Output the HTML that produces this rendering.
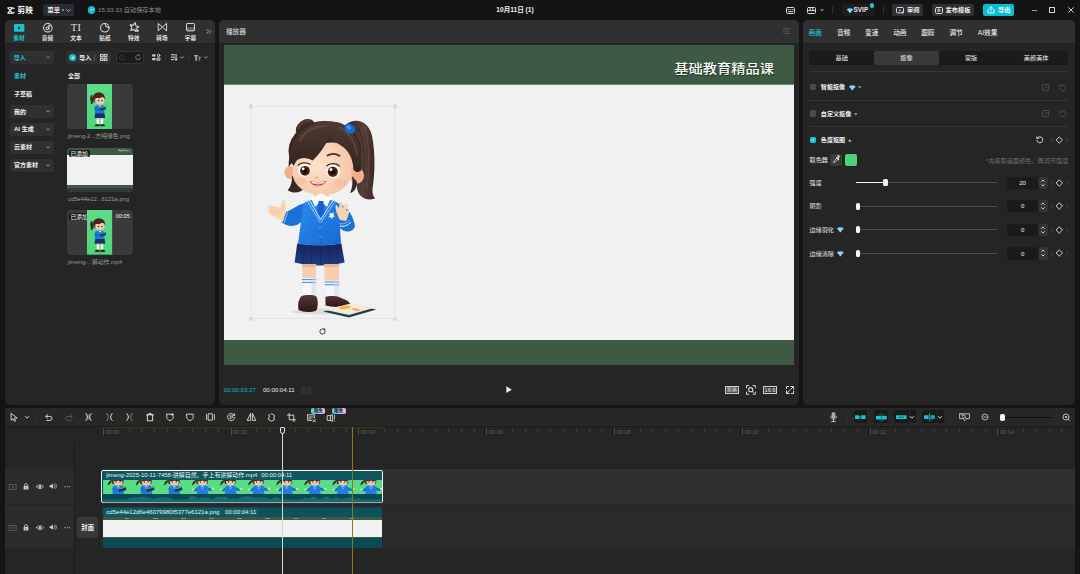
<!DOCTYPE html>
<html lang="zh-CN">
<head>
<meta charset="utf-8">
<title>剪映</title>
<style>
*{box-sizing:border-box;margin:0;padding:0}
html,body{width:1080px;height:574px;overflow:hidden;background:#141414}
body{position:relative;font-family:"Liberation Sans","Noto Sans CJK SC",sans-serif;color:#e6e6e6;font-size:7px;line-height:1}
.a{position:absolute}
.t{position:absolute;white-space:nowrap;line-height:10px;height:10px}
.c{color:#1ec8d6}
.panel{position:absolute;background:#252525;border-radius:5px;overflow:hidden}
.phead{position:absolute;left:0;top:0;right:0;height:23.6px;background:#303030;border-bottom:0.8px solid #222}
.btn{position:absolute;background:#303033;border-radius:2px}
svg{position:absolute;overflow:visible}
.ic{stroke:#d8d8d8;fill:none;stroke-width:1;stroke-linecap:round;stroke-linejoin:round}
.dim{color:#8c8c8c}
.hd{width:4.6px;height:4.6px;border-radius:3px;background:#d9d9d9}
</style>
</head>
<body>
<svg width="0" height="0" style="position:absolute">
<defs>
  <linearGradient id="gg" x1="0" y1="0" x2="0" y2="1"><stop offset="0" stop-color="#5edc8a"/><stop offset="1" stop-color="#50d57e"/></linearGradient>
  <symbol id="girlR" viewBox="0 0 25.2 45.2">
    <rect width="25.2" height="45.2" fill="url(#gg)"/>
    <ellipse cx="12.5" cy="42" rx="6" ry="1.2" fill="#3fb866"/>
    <path d="M5 10.5c-1.8 1-2.2 4-1.4 6.2c0.5 1.5 0.3 2.6-0.3 3.4c1.6 0.2 3-0.8 3.4-2.4z" fill="#3b2620"/>
    <ellipse cx="11.8" cy="13.6" rx="6" ry="5.4" fill="#45291f"/>
    <ellipse cx="12.8" cy="16.2" rx="4.7" ry="4.2" fill="#f6cfb2"/>
    <path d="M7.4 14.5c1.5-3.6 6.5-4.4 10-1.2c-2.6-0.4-4 0.2-5.2 1.2c-1.6-0.6-3.4-0.4-4.8 0z" fill="#45291f"/>
    <circle cx="11.4" cy="16.6" r="0.8" fill="#3a1f18"/><circle cx="15" cy="16.6" r="0.8" fill="#3a1f18"/>
    <path d="M12.4 18.7q0.9 0.6 1.8 0" stroke="#c45a4d" stroke-width="0.4" fill="none"/>
    <path d="M8.4 22c1.2-1.4 6.8-1.4 8.4 0l0.8 7.4h-9.8z" fill="#1d78dc"/>
    <path d="M11.4 21.2l1.4 1.6l1.4-1.6z" fill="#fff"/>
    <path d="M8.2 22.4c-1.2 1.4-1.4 3.6 0.6 4.6l4-0.6v-1.6l-3 0.2z" fill="#1869c9"/>
    <path d="M12.6 23.6l5.8-1.4l0.8 3l-5.8 1.6z" fill="#173f52"/>
    <path d="M12.8 24l5.4-1.3" stroke="#e8eef0" stroke-width="0.4"/>
    <path d="M8.2 29.2h9.2l0.8 4.8h-10.8z" fill="#18306f"/>
    <rect x="9.6" y="34" width="2.6" height="2" fill="#f3c9ab"/><rect x="13.6" y="34" width="2.6" height="2" fill="#f3c9ab"/>
    <rect x="9.6" y="35.6" width="2.6" height="4.6" fill="#f4f6f8"/><rect x="13.6" y="35.6" width="2.6" height="4.6" fill="#f4f6f8"/>
    <path d="M8.8 40.2h3.6v1.8h-4.2c-0.2-0.8 0-1.4 0.6-1.8zM13.4 40.2h3.4c0.8 0.4 1.2 1 1 1.8h-4.4z" fill="#2a1917"/>
  </symbol>
<symbol id="girlBig" viewBox="262 112 120 210">
  <!-- ponytail -->
  <path d="M344,126 C355,116 369,121 372,136 C375.4,152 375,174 372.6,188 C372,193 373,196 375,198.4 C368,201 361.6,198.6 358.6,193 C355.6,187 357,181 358.4,176 L361,165 L352,140Z" fill="url(#hairG)"/>
  <path d="M364,126 C370,142 370,168 366.6,190" stroke="#6f4f41" stroke-width="1.6" fill="none" opacity=".55"/><path d="M358.6,128 C364,142 365,162 362.6,182" stroke="#2e1c17" stroke-width="1.2" fill="none" opacity=".5"/>
  <!-- bun left -->
  <ellipse cx="305.5" cy="128" rx="10.5" ry="8" fill="#3f2c26" transform="rotate(-35 305.5 128)"/>
  <path d="M298,129 C300,123 306,120 311,121" stroke="#6d4b3d" stroke-width="1.5" fill="none" opacity=".7"/>
  <!-- hair back -->
  <ellipse cx="325" cy="151" rx="36.5" ry="30" fill="#3a2823"/>
  <!-- ears -->
  <ellipse cx="290" cy="172.5" rx="5.6" ry="6.4" fill="#f2b08a"/>
  <ellipse cx="356.8" cy="175.5" rx="7.2" ry="8.2" fill="#f3b48e"/>
  <ellipse cx="357" cy="176" rx="3.4" ry="4.4" fill="#eea583" opacity=".7"/>
  <!-- side strands -->
  <path d="M292,176 C292,184 290,188 287.5,190 C294,194.5 301,192.5 305,188 C299,186 296.5,182 296,175Z" fill="#3a2823"/>
  <path d="M352,176 C353,183 352,189 350,193 C354,192 357,188 357,182Z" fill="#3a2823"/>
  <!-- neck -->
  <path d="M314,190 h15 v10 h-15z" fill="#efb896"/>
  <!-- face -->
  <ellipse cx="332" cy="161" rx="23" ry="18.5" fill="url(#skinG)"/><ellipse cx="322" cy="172.5" rx="29.6" ry="23" fill="url(#skinG)"/>
  <ellipse cx="300.5" cy="181.5" rx="5.5" ry="3.6" fill="#f59f8a" opacity=".3"/>
  <ellipse cx="340" cy="183" rx="6" ry="3.8" fill="#f59f8a" opacity=".3"/>
  <!-- eyes -->
  <ellipse cx="304.4" cy="170.2" rx="6.3" ry="6.5" fill="#fffaf6"/>
  <circle cx="305" cy="170.8" r="4.9" fill="#4b2417"/><circle cx="305" cy="171" r="2.7" fill="#1c0c08"/><circle cx="303.2" cy="168.8" r="1.4" fill="#fff"/>
  <ellipse cx="333.2" cy="171.2" rx="6.6" ry="6.8" fill="#fffaf6"/>
  <circle cx="332.8" cy="171.8" r="5.1" fill="#4b2417"/><circle cx="332.8" cy="172" r="2.8" fill="#1c0c08"/><circle cx="331" cy="169.6" r="1.5" fill="#fff"/>
  <path d="M298,165.6 C300,162.6 306,161.8 310.4,164.4" stroke="#3a221b" stroke-width="1.2" fill="none"/>
  <path d="M326.6,166 C329.6,162.8 336.6,162.8 340,166.4" stroke="#3a221b" stroke-width="1.2" fill="none"/>
  <path d="M327.5,155.5 C331,153.4 336,153.6 339.5,155.8" stroke="#4a2f27" stroke-width="1.8" fill="none" stroke-linecap="round"/>
  <ellipse cx="316.6" cy="177.4" rx="1.6" ry="1.1" fill="#f0a488" opacity=".8"/>
  <!-- mouth -->
  <path d="M309.6,181 C313,182.4 322,182.4 326,181 C324,187 312,187.4 309.6,181Z" fill="#a82a35"/>
  <path d="M311.2,181.6 C315,182.8 321,182.8 324.6,181.6 L324,183.2 C320,184 315,184 311.8,183.2Z" fill="#fff"/>
  <path d="M313.5,185.4 C316,184 320,184 322,185.2 C319.5,186.8 316,186.8 313.5,185.4Z" fill="#f08a8a"/>
  <!-- bangs -->
  <path d="M331,122 C310,119 289,134 288.6,167 C292,162 297.6,158.6 304,158 C307,158 310,159 312.6,160.6 C319,154.6 325,146.6 328.6,138 C330.6,133 331.6,127 331,122Z" fill="url(#hairG2)"/>
  <path d="M331,122 C346,120 363,136 361.4,170 C358.6,173 355.6,172.5 353.6,170 C353,160 349.6,151 341.6,146 C336.6,143 332.6,140.6 329.6,137 C330.8,132 331.6,127 331,122Z" fill="url(#hairG2)"/>
  <path d="M300,140 C305,131 315,126 326,126" stroke="#7a5646" stroke-width="2.2" fill="none" opacity=".55" stroke-linecap="round"/>
  <path d="M340,128 C350,133 356,144 357,156" stroke="#7a5646" stroke-width="2" fill="none" opacity=".45" stroke-linecap="round"/>
  <!-- hair tie -->
  <ellipse cx="349.8" cy="128.8" rx="5.6" ry="4.6" fill="#1668d8" transform="rotate(35 349.8 128.8)"/>
  <ellipse cx="348.8" cy="127.4" rx="2.6" ry="1.6" fill="#4f9bf2" transform="rotate(35 348.8 127.4)"/>
  <!-- arms behind body -->
  <path d="M305,203 C297,205 290,211 285.6,212 L281.6,222.6 C290,228.6 299,226 304,219Z" fill="#1b72d6"/>
  <path d="M337,203 C346,205 353,214 355,226 C353,233 344,233 340,228 L337,218Z" fill="#1b72d6"/>
  <!-- body -->
  <path d="M303.6,203.6 C309,197.6 333,197.6 338.4,203.6 L341,243.6 C327,246 311,246 298,243.6Z" fill="url(#jackG)"/>
  <path d="M311,197.4 L321,193.6 L331,197.4 L327,207 L321,201 L315,207Z" fill="#fbfcff"/>
  <path d="M318.6,201 h4.8 l0.8,12.4 l-3.2,4 l-3.2,-4z" fill="#1560d0"/>
  <path d="M309,199.4 L320.6,219.6 L333.6,199.4" stroke="#e8f2ff" stroke-width="0.9" fill="none"/>
  <path d="M307,200.6 L320.6,223 L335.6,200.6" stroke="#e8f2ff" stroke-width="0.7" fill="none" opacity=".85"/>
  <circle cx="320.4" cy="227.4" r="0.9" fill="#b6d4f7"/><circle cx="320.4" cy="236.6" r="0.9" fill="#b6d4f7"/>
  <path d="M320.4,222 V244.6" stroke="#1462c4" stroke-width="0.6"/>
  <path d="M330.6,211.6 l1.4,2 l2.2,-0.8 l-0.8,2.2 l1.6,1.6 l-2.2,0.2 l-0.8,2.4 l-1.2,-2 l-2.4,0 l1.6,-1.8 l-1,-2.2 l2.2,0.6z" fill="#fff"/>
  <!-- cuffs -->
  <path d="M285.6,212 L281.6,222.6" stroke="#eef5ff" stroke-width="1" /><path d="M287.6,212.6 L283.8,223.6" stroke="#eef5ff" stroke-width="0.7" opacity=".8"/>
  <path d="M340,226 C344,227 348,225.4 351,222" stroke="#eef5ff" stroke-width="1" fill="none"/><path d="M339.4,223.6 C343,224.6 347,223 349.8,219.8" stroke="#eef5ff" stroke-width="0.7" fill="none" opacity=".8"/>
  <!-- left hand -->
  <path d="M285.4,211.6 C282,207.6 276,206.4 269.6,205.6 C267.2,205.8 267.6,207.8 270,208.6 C266.8,208.6 267,211 270,211.6 C268,212.4 268.6,214.4 271.6,214.4 C271,215.8 272.4,216.8 274.6,216.2 C277.6,219 280.6,220.6 283.6,220.6Z" fill="#f9d2b2"/>
  <path d="M280.4,209.6 C280.4,205 281.6,201.8 283.2,199.8 C285.4,200.2 286,205 285.8,211Z" fill="#f9d2b2"/>
  <path d="M272,211.6 C275,212 278,213 280,215" stroke="#eab596" stroke-width="0.5" fill="none"/>
  <!-- right hand -->
  <path d="M340,220 C337,214 335,209 335.6,205.4 C337,204.4 338.4,206.4 339,209 C339,205.6 339.6,202.4 341.4,201.6 C343,202.4 342.6,206 342.6,208.6 C343.6,205.6 345.4,203.4 347,204 C348.4,205.6 346.6,209 346,211.6 C347.6,210 349,210 349.2,211.4 C348.6,214.6 347.6,218 346,221Z" fill="#f9d2b2"/>
  <!-- skirt -->
  <path d="M297.2,243.4 C311,245.8 327,245.8 341.4,243.4 L344.6,262.6 C329,266.4 310,266.4 294.6,262.6Z" fill="url(#skirtG)"/>
  <path d="M304,245 L302.6,264 M312,245.6 L311.4,265 M320.4,245.8 V265.4 M329,245.6 L330,265 M336,245 L338,264" stroke="#13234f" stroke-width="0.6" opacity=".8"/>
  <!-- legs -->
  <path d="M302.4,264 h13.6 v15 h-13.6z" fill="#f6cdae"/><path d="M324.4,264 h14.6 v17 h-14.6z" fill="#f6cdae"/>
  <path d="M302,264 h14.4 v3 h-14.4z M324,264 h15.4 v3 h-15.4z" fill="#d9a588" opacity=".55"/>
  <path d="M302,278 h14.2 l-0.6,19 h-12.6z" fill="#f4f6f9"/><path d="M324.6,280.4 h14.6 l-0.6,18 h-13.4z" fill="#f4f6f9"/>
  <path d="M302,279.6 h14.2 M302,282.4 h14.2" stroke="#3a86e4" stroke-width="1"/>
  <path d="M324.6,282 h14.6 M324.6,284.8 h14.6" stroke="#3a86e4" stroke-width="1"/>
  <path d="M311,278 h5.2 l-0.6,19 h-3.6z M334,280.4 h5.2 l-0.6,18 h-3.6z" fill="#c9d3e0" opacity=".5"/>
  <!-- shadows -->
  <ellipse cx="322" cy="311.5" rx="30" ry="3" fill="#cfcfcf" opacity=".6"/>
  <!-- shoes -->
  <path d="M301.6,296 C306,294.6 313,294.6 316.4,296.4 C318.4,301 318,307 316.4,310.4 C311,312.6 303,312.4 298.6,310 C297.4,304.6 298.6,299 301.6,296Z" fill="url(#shoeG)"/>
  <path d="M325.4,297 C329,295.4 336,295.6 340,297.4 C345,299 350,301.6 350.4,304.4 C345,307.4 332,307.6 325.6,305.6Z" fill="url(#shoeG)"/>
  <!-- book -->
  <path d="M323,311.4 L351,304.6 L376.4,309.4 L349,317.4Z" fill="#1e3e52"/>
  <path d="M324.6,309.8 L351,303.4 L374.4,307.8 L349,315Z" fill="#f3ecd2"/>
  <path d="M337.6,306.6 L362,311.2" stroke="#cfc6a5" stroke-width="0.5"/>
  <ellipse cx="345" cy="307.4" rx="6" ry="1.8" fill="#f0b84a" transform="rotate(-8 345 307.4)"/>
  <ellipse cx="356" cy="309.6" rx="4" ry="1.4" fill="#f3a7a0" transform="rotate(8 356 309.6)"/>
</symbol>
<linearGradient id="hairG" x1="0" y1="0" x2="1" y2="0"><stop offset="0" stop-color="#33221d"/><stop offset=".6" stop-color="#54403a"/><stop offset="1" stop-color="#3a2823"/></linearGradient>
<linearGradient id="hairG2" x1="0" y1="0" x2="0" y2="1"><stop offset="0" stop-color="#4e3a33"/><stop offset="1" stop-color="#34241f"/></linearGradient>
<radialGradient id="skinG" gradientUnits="userSpaceOnUse" cx="318" cy="166" r="38"><stop offset="0" stop-color="#fde3cb"/><stop offset="1" stop-color="#f5c4a3"/></radialGradient>
<linearGradient id="jackG" x1="0" y1="0" x2="1" y2="1"><stop offset="0" stop-color="#2b8cf0"/><stop offset="1" stop-color="#166ad2"/></linearGradient>
<linearGradient id="skirtG" x1="0" y1="0" x2="0" y2="1"><stop offset="0" stop-color="#15275d"/><stop offset="1" stop-color="#213a82"/></linearGradient>
<linearGradient id="shoeG" x1="0" y1="0" x2="0" y2="1"><stop offset="0" stop-color="#553632"/><stop offset="1" stop-color="#2c1a18"/></linearGradient>
<symbol id="gf" viewBox="0 0 28.1 14.1">
  <path d="M8.8,0 C6.4,0.6 5,2.6 4.6,5.4 C5.8,5 7,3.8 8,2.4 L10,0Z" fill="#3b241d"/>
  <path d="M9.4,0 H20.4 C20.8,1.6 20.4,3 19.6,4 H9.6 C8.8,2.8 8.8,1.2 9.4,0Z" fill="#43281f"/>
  <path d="M10.6,0 H19.8 C20.2,3.2 18.2,5.6 15.2,5.6 C12.2,5.6 10,3.4 10.6,0Z" fill="#f7d0b3"/>
  <path d="M10.4,0 H20 C20,0.8 19.6,1.2 19,1.4 C17,0.4 13,0.4 11,1.6 C10.6,1.2 10.4,0.6 10.4,0Z" fill="#43281f"/>
  <circle cx="13.2" cy="2" r="0.7" fill="#3a1c14"/><circle cx="17" cy="2" r="0.7" fill="#3a1c14"/>
  <path d="M14.2,3.8 Q15.2,4.6 16.2,3.8Z" fill="#b33a3a"/>
  <path d="M10.4,6 C12,5 18.4,5 20,6 L21,14.1 H9.4Z" fill="#1f7de0"/>
  <path d="M14,5.4 L15.2,7 L16.4,5.4Z" fill="#fff"/>
  <path d="M13.2,5.8 L15.2,9 L17.2,5.8" stroke="#dcecff" stroke-width="0.4" fill="none"/>
</symbol>
<symbol id="gfb" viewBox="0 0 28.1 14.1"><use href="#gf"/><path d="M15,8.6 L22.4,6.6 L23.4,10 L16,12Z" fill="#16394a"/><path d="M15.4,9 L22.2,7.2" stroke="#eef3f5" stroke-width="0.5"/><path d="M10,7 C8.6,9 9.4,11.4 11.4,12 L15.6,11 V9.4 L12.4,9.8Z" fill="#1a6fce"/></symbol>
<symbol id="gfh" viewBox="0 0 28.1 14.1"><use href="#gf"/><path d="M20,7 C22,8 23.4,9 24.4,8.4 L25.2,10 C23.4,11.4 21.4,11 20.4,10Z" fill="#1a6fce"/><ellipse cx="25.4" cy="8.8" rx="1.5" ry="1" fill="#f7d0b3"/><path d="M10.4,7 C8.6,8.4 7.6,9.4 6.6,9 L6,10.6 C7.8,11.8 9.6,11.2 10.6,10Z" fill="#1a6fce"/><ellipse cx="5.8" cy="9.4" rx="1.4" ry="1" fill="#f7d0b3"/></symbol>
</defs>
</svg>
<!-- ===== TITLE BAR ===== -->
<div id="titlebar" class="a" style="left:0;top:0;width:1080px;height:20px;">
  <!-- logo -->
  <svg style="left:7px;top:7px" width="8" height="7" viewBox="0 0 8 7"><path d="M0.5 0.7h5.3l1.7 1.2M0.5 6.3h5.3l1.7-1.2M0.5 0.7l5.2 5.6M0.5 6.3l5.2-5.6" stroke="#fff" stroke-width="1.1" fill="none" stroke-linejoin="round"/></svg>
  <div class="t" style="left:17.5px;top:5.5px;font-size:7.6px;font-weight:bold;color:#fff;letter-spacing:0.2px">剪映</div>
  <div class="btn" style="left:43px;top:4px;width:31px;height:12px;background:#2b2b31"></div>
  <div class="t" style="left:47.5px;top:5px;font-size:6.2px;color:#f0f0f0;font-weight:bold">菜单</div>
  <div class="a" style="left:61.5px;top:9px;width:2px;height:2px;border-radius:1px;background:#1ec8d6"></div>
  <svg style="left:66px;top:8.5px" width="5" height="3" viewBox="0 0 5 3"><path d="M0.3 0.4L2.5 2.5L4.7 0.4" stroke="#cfcfcf" stroke-width="0.8" fill="none"/></svg>
  <div class="a" style="left:87.7px;top:6.2px;width:7.6px;height:7.6px;border-radius:4px;background:#12bfcf"></div>
  <svg style="left:89.5px;top:8.4px" width="4" height="3" viewBox="0 0 4 3"><path d="M0.4 1.5L1.5 2.6L3.6 0.5" stroke="#fff" stroke-width="0.8" fill="none"/></svg>
  <div class="t" style="left:98px;top:5px;font-size:6.2px;color:#8f8f8f">15:33:33 自动保存本地</div>
  <div class="t" style="left:440px;width:150px;text-align:center;top:5px;font-size:6.6px;font-weight:bold;color:#f2f2f2">10月11日 (1)</div>
  <!-- right icons -->
  <svg style="left:786px;top:7px" width="9" height="7" viewBox="0 0 9 7"><rect x="0.5" y="0.5" width="8" height="6" rx="1" class="ic" stroke-width="0.9"/><path d="M2.2 4.6h4.6M2 2.6h0.6M4.2 2.6h0.6M6.4 2.6h0.6" class="ic" stroke-width="0.8"/></svg>
  <svg style="left:807px;top:7px" width="9" height="7" viewBox="0 0 9 7"><rect x="0.5" y="0.5" width="8" height="6" rx="1" class="ic" stroke-width="0.9"/><path d="M0.5 3.6h8M3.2 0.5v3M5.8 0.5v3" class="ic" stroke-width="0.8"/></svg>
  <svg style="left:820px;top:9px" width="4" height="3" viewBox="0 0 4 3"><path d="M0 0.3h4L2 2.6z" fill="#8a8a8a"/></svg>
  <div class="a" style="left:831.5px;top:6px;width:1px;height:8px;background:#303030"></div>
  <div class="btn" style="left:841.5px;top:4px;width:32.5px;height:12px;background:#1d1d20;border-radius:3px"></div>
  <svg style="left:846.5px;top:7.5px" width="6" height="5" viewBox="0 0 6 5"><path d="M1.2 0.2h3.6L6 1.7L3 4.9L0 1.7z" fill="#3fc3ee"/><path d="M0 1.7h6M2.1 1.7L3 4.8L3.9 1.7" stroke="#e8f8ff" stroke-width="0.5" fill="none"/></svg>
  <div class="t" style="left:853.5px;top:5px;font-size:6.3px;font-weight:bold;color:#e8e8e8;letter-spacing:0.1px">SVIP</div>
  <div class="a" style="left:870px;top:3.4px;width:4.4px;height:4.4px;border-radius:2.2px;background:#1ec8d6"></div>
  <div class="a" style="left:882.5px;top:6px;width:1px;height:8px;background:#303030"></div>
  <div class="btn" style="left:892px;top:4px;width:31px;height:12px"></div>
  <svg style="left:896px;top:7px" width="8" height="7" viewBox="0 0 8 7"><rect x="0.5" y="0.5" width="7" height="5.4" rx="1" class="ic" stroke-width="0.9"/><path d="M3.2 2.2v2.2l1.8-1.1z" fill="#d8d8d8"/><circle cx="6.6" cy="5.6" r="1" fill="#d8d8d8"/></svg>
  <div class="t" style="left:907px;top:5px;font-size:6.2px;font-weight:bold;color:#ececec">审阅</div>
  <div class="btn" style="left:931.5px;top:4px;width:42.5px;height:12px"></div>
  <svg style="left:934.7px;top:6.7px" width="8" height="7" viewBox="0 0 8 7"><rect x="0.5" y="0.5" width="7" height="6" rx="1.2" class="ic" stroke-width="0.9"/><path d="M3.1 2.2v2.6l2.1-1.3z" class="ic" stroke-width="0.7"/></svg>
  <div class="t" style="left:945.6px;top:5px;font-size:6.2px;font-weight:bold;color:#ececec">发布模板</div>
  <div class="btn" style="left:983px;top:4px;width:30.5px;height:12px;background:#07c0cf"></div>
  <svg style="left:987px;top:6.3px" width="8" height="8" viewBox="0 0 8 8"><path d="M1 3.6v3.4h6V3.6M4 5V0.8M2.3 2.4L4 0.7L5.7 2.4" stroke="#fff" stroke-width="0.9" fill="none" stroke-linejoin="round" stroke-linecap="round"/></svg>
  <div class="t" style="left:998px;top:5px;font-size:6.2px;font-weight:bold;color:#fff">导出</div>
  <div class="a" style="left:1031.5px;top:10px;width:5.5px;height:1px;background:#9a9a9a"></div>
  <div class="a" style="left:1049px;top:7.3px;width:6.4px;height:5.8px;border:1px solid #d8d8d8;border-radius:0.5px"></div>
  <svg style="left:1067.5px;top:7.2px" width="6" height="6" viewBox="0 0 6 6"><path d="M0.3 0.3L5.7 5.7M5.7 0.3L0.3 5.7" stroke="#d8d8d8" stroke-width="0.9"/></svg>
</div>

<!-- ===== LEFT PANEL ===== -->
<div id="left" class="panel" style="left:5px;top:20px;width:210px;height:385px;">
  <div class="phead"></div>
  <div class="t" style="left:-1.0px;width:30px;text-align:center;top:12.5px;font-size:5.65px;color:#1ec8d6;font-weight:bold">素材</div>
  <div class="t" style="left:27.5px;width:30px;text-align:center;top:12.5px;font-size:5.65px;color:#e0e0e0;font-weight:bold">音频</div>
  <div class="t" style="left:56.0px;width:30px;text-align:center;top:12.5px;font-size:5.65px;color:#e0e0e0;font-weight:bold">文本</div>
  <div class="t" style="left:85.0px;width:30px;text-align:center;top:12.5px;font-size:5.65px;color:#e0e0e0;font-weight:bold">贴纸</div>
  <div class="t" style="left:113.7px;width:30px;text-align:center;top:12.5px;font-size:5.65px;color:#e0e0e0;font-weight:bold">特效</div>
  <div class="t" style="left:142.0px;width:30px;text-align:center;top:12.5px;font-size:5.65px;color:#e0e0e0;font-weight:bold">转场</div>
  <div class="t" style="left:170.5px;width:30px;text-align:center;top:12.5px;font-size:5.65px;color:#e0e0e0;font-weight:bold">字幕</div>
  <svg style="left:8.8px;top:3.6px" width="10.4" height="7.8" viewBox="0 0 10.4 7.8"><rect x="0" y="0" width="10.4" height="7.8" rx="1" fill="#12c3d1"/><path d="M4 2.2v3.4l3-1.7z" fill="#1b1b1b"/></svg>
  <svg style="left:37.7px;top:2.7px" width="9.6" height="9.6" viewBox="0 0 9 9"><circle cx="4.5" cy="4.5" r="4" class="ic" stroke-width="0.8"/><circle cx="4.2" cy="5" r="1.3" class="ic" stroke-width="0.8"/><path d="M5.5 5V2.2l1.3 0.6" class="ic" stroke-width="0.8"/></svg>
  <div class="t" style="left:56px;width:30px;text-align:center;top:1.6px;line-height:12px;height:12px;font-size:10.5px;color:#dcdcdc;font-family:'Liberation Serif',serif;letter-spacing:0.3px">TI</div>
  <svg style="left:95.2px;top:2.8px" width="9.6" height="9.6" viewBox="0 0 9 9"><circle cx="4.5" cy="4.5" r="4" class="ic" stroke-width="0.8"/><path d="M4.9 0.6C4.7 2.8 6.2 4.3 8.4 4.1" class="ic" stroke-width="0.8"/></svg>
  <svg style="left:123.6px;top:2.4px" width="10.4" height="10.2" viewBox="0 0 9.6 9.4"><g transform="rotate(12 4.8 4.8)"><path d="M4.8 0.5L6 3.1L8.9 3.5L6.8 5.5L7.3 8.4L4.8 7L2.3 8.4L2.8 5.5L0.7 3.5L3.6 3.1z" class="ic" stroke-width="0.75"/></g><path d="M8 7.2v1.6M7.2 8h1.6" class="ic" stroke-width="0.6"/></svg>
  <svg style="left:152.6px;top:3.4px" width="8.8" height="8.2" viewBox="0 0 8.8 8.2"><path d="M0.5 0.6L4.4 4.1L0.5 7.6zM8.3 0.6L4.4 4.1L8.3 7.6z" class="ic" stroke-width="0.8"/></svg>
  <svg style="left:181px;top:3.2px" width="9" height="8.4" viewBox="0 0 9 8.4"><rect x="0.5" y="0.5" width="8" height="7.4" rx="0.8" class="ic" stroke-width="0.8"/><path d="M0.6 4.4h7.8v3.4H0.6z" fill="#bdbdbd" opacity="0.55"/><path d="M1.8 6.2h2M4.8 6.2h2.4" stroke="#222" stroke-width="0.7"/></svg>
  <svg style="left:200.5px;top:9px" width="5.4" height="5" viewBox="0 0 5.4 5"><path d="M0.4 0.4L2.5 2.5L0.4 4.6M2.9 0.4L5 2.5L2.9 4.6" stroke="#bdbdbd" stroke-width="0.7" fill="none"/></svg>
  <div class="btn" style="left:5.0px;top:30.8px;width:44.2px;height:13px;background:#303033;border-radius:2px"></div>
  <div class="t" style="left:8.8px;top:32.5px;font-size:6px;color:#1ec8d6;font-weight:bold;">导入</div>
  <svg style="left:40.7px;top:35.8px" width="4" height="2.8" viewBox="0 0 4 2.8"><path d="M0.3 2.2L2 0.5L3.7 2.2" stroke="#1ec8d6" stroke-width="0.8" fill="none"/></svg>
  <div class="t" style="left:9.0px;top:51.0px;font-size:6px;color:#1ec8d6;font-weight:bold;">素材</div>
  <div class="t" style="left:9.0px;top:69.0px;font-size:6px;color:#f2f2f2;font-weight:bold;">子草稿</div>
  <div class="btn" style="left:4.8px;top:84.8px;width:44.6px;height:13.2px;background:#303033;border-radius:2px"></div>
  <div class="t" style="left:9.0px;top:86.5px;font-size:6px;color:#f2f2f2;font-weight:bold;">我的</div>
  <svg style="left:40.9px;top:89.7px" width="4" height="2.8" viewBox="0 0 4 2.8"><path d="M0.3 0.5L2 2.2L3.7 0.5" stroke="#bdbdbd" stroke-width="0.8" fill="none"/></svg>
  <div class="btn" style="left:4.8px;top:102.7px;width:44.6px;height:13.2px;background:#303033;border-radius:2px"></div>
  <div class="t" style="left:9.0px;top:104.4px;font-size:6px;color:#f2f2f2;font-weight:bold;">AI 生成</div>
  <svg style="left:40.9px;top:107.6px" width="4" height="2.8" viewBox="0 0 4 2.8"><path d="M0.3 0.5L2 2.2L3.7 0.5" stroke="#bdbdbd" stroke-width="0.8" fill="none"/></svg>
  <div class="btn" style="left:4.8px;top:120.7px;width:44.6px;height:13.2px;background:#303033;border-radius:2px"></div>
  <div class="t" style="left:9.0px;top:122.4px;font-size:6px;color:#f2f2f2;font-weight:bold;">云素材</div>
  <svg style="left:40.9px;top:125.6px" width="4" height="2.8" viewBox="0 0 4 2.8"><path d="M0.3 0.5L2 2.2L3.7 0.5" stroke="#bdbdbd" stroke-width="0.8" fill="none"/></svg>
  <div class="btn" style="left:4.8px;top:138.6px;width:44.6px;height:13.2px;background:#303033;border-radius:2px"></div>
  <div class="t" style="left:9.0px;top:140.3px;font-size:6px;color:#f2f2f2;font-weight:bold;">官方素材</div>
  <svg style="left:40.9px;top:143.5px" width="4" height="2.8" viewBox="0 0 4 2.8"><path d="M0.3 0.5L2 2.2L3.7 0.5" stroke="#bdbdbd" stroke-width="0.8" fill="none"/></svg>
  <div class="btn" style="left:61.0px;top:30.8px;width:44.6px;height:13px;background:#303033;border-radius:2px"></div>
  <div class="a" style="left:64.2px;top:34.2px;width:6.6px;height:6.6px;border-radius:4px;background:#12c3d1"></div>
  <svg style="left:65.7px;top:35.7px" width="3.6" height="3.6" viewBox="0 0 3.6 3.6"><path d="M1.8 0.3v3M0.3 1.8h3" stroke="#fff" stroke-width="0.7"/></svg>
  <div class="t" style="left:74.3px;top:32.5px;font-size:6px;color:#f2f2f2;font-weight:bold;">导入</div>
  <div class="a" style="left:89.3px;top:34.5px;width:0.6px;height:6px;background:#555"></div>
  <svg style="left:94.6px;top:34.1px" width="7.4" height="6.9" viewBox="0 0 7.2 6.8"><rect x="0.4" y="0.4" width="2.6" height="2.2" class="ic" stroke-width="0.7"/><rect x="4.2" y="0.4" width="2.6" height="2.2" class="ic" stroke-width="0.7"/><rect x="0.4" y="4.2" width="2.6" height="2.2" class="ic" stroke-width="0.7"/><rect x="4.2" y="4.2" width="2.6" height="2.2" class="ic" stroke-width="0.7"/></svg>
  <div class="a" style="left:110.5px;top:30.799999999999997px;width:28.6px;height:13px;background:#1b1b1b;border:0.8px solid #353535;border-radius:2px"></div>
  <svg style="left:113.8px;top:34.6px" width="6" height="6" viewBox="0 0 5 5"><circle cx="2.1" cy="2.1" r="1.7" stroke="#474747" stroke-width="0.55" fill="none"/><path d="M3.4 3.4L4.7 4.7" stroke="#474747" stroke-width="0.55"/></svg>
  <svg style="left:129.8px;top:34.4px" width="6.4" height="6.4" viewBox="0 0 5 5"><path d="M4.4 2.5A1.9 1.9 0 1 1 3.4 0.9" stroke="#8a8a8a" stroke-width="0.6" fill="none"/><path d="M2.8 0.2L3.8 0.9L3 1.8" stroke="#8a8a8a" stroke-width="0.5" fill="none"/></svg>
  <svg style="left:147px;top:34.3px" width="8.6" height="6.6" viewBox="0 0 8.6 6.6"><rect x="0.2" y="0.3" width="3.2" height="2.3" fill="#d0d0d0"/><rect x="0.2" y="4" width="3.2" height="2.3" fill="#d0d0d0"/><circle cx="6.6" cy="1.4" r="1.2" class="ic" stroke-width="0.7"/><rect x="5.3" y="4.1" width="2.7" height="2.1" class="ic" stroke-width="0.7"/></svg>
  <div class="a" style="left:160px;top:34.5px;width:0.6px;height:6px;background:#383838"></div>
  <svg style="left:165.6px;top:34.2px" width="6.4" height="6.8" viewBox="0 0 6.4 6.8"><path d="M0.3 0.8h3.4M0.3 3.2h3.4M0.3 5.6h2.4M5.1 0.4v5.8M3.9 5L5.1 6.3L6.2 5" class="ic" stroke-width="0.8"/></svg>
  <svg style="left:175.0px;top:36.4px" width="4" height="2.8" viewBox="0 0 4 2.8"><path d="M0.3 0.5L2 2.2L3.7 0.5" stroke="#bdbdbd" stroke-width="0.8" fill="none"/></svg>
  <div class="a" style="left:183px;top:34.5px;width:0.6px;height:6px;background:#383838"></div>
  <svg style="left:189.3px;top:34.6px" width="7" height="6" viewBox="0 0 7 6"><path d="M0.2 0.3h3.8v1H2.7v4.4H1.5V1.3H0.2z" fill="#d8d8d8"/><path d="M4.6 2.2h2.2M4.6 3.7h1.7M4.6 5.2h1.1" stroke="#d8d8d8" stroke-width="0.8"/></svg>
  <svg style="left:198.6px;top:36.4px" width="4" height="2.8" viewBox="0 0 4 2.8"><path d="M0.3 0.5L2 2.2L3.7 0.5" stroke="#bdbdbd" stroke-width="0.8" fill="none"/></svg>
  <div class="t" style="left:63.0px;top:50.5px;font-size:6px;color:#e6e6e6;font-weight:bold;">全部</div>
  <div class="a" style="left:61.8px;top:64px;width:66.7px;height:45.2px;background:#3a3a3a;border-radius:4px;overflow:hidden"><svg style="left:20.2px;top:0" width="25.2" height="45.2"><use href="#girlR"/></svg></div>
  <div class="t" style="left:63.0px;top:111.3px;font-size:5.82px;color:#9b9b9b;">jimeng-2...方纯绿色.png</div>
  <div class="a" style="left:61.8px;top:127.6px;width:66.7px;height:44.6px;background:#3a3a3a;border-radius:4px;overflow:hidden"><div class="a" style="left:0;top:0.6px;width:66.7px;height:40px;background:#3e5944"></div><div class="a" style="left:0;top:7px;width:66.7px;height:30.4px;background:#f1f1f1"></div><div class="t" style="left:51.6px;top:-1.3px;font-size:1.65px;color:#dfe8e2">基础教育精品课</div><div class="a" style="left:2px;top:2.4px;width:20.8px;height:7.4px;background:rgba(20,20,20,0.85);border-radius:1.5px"></div><div class="t" style="left:3.6px;top:1.1px;font-size:5.8px;color:#f4f4f4">已添加</div></div>
  <div class="t" style="left:63.0px;top:174.0px;font-size:5.82px;color:#9b9b9b;">cd5e44e12...6121a.png</div>
  <div class="a" style="left:61.8px;top:190.3px;width:66.7px;height:44.8px;background:#3a3a3a;border-radius:4px;overflow:hidden"><div class="a" style="left:2px;top:2.6px;width:20.8px;height:7.4px;background:rgba(20,20,20,0.85);border-radius:1.5px"></div><div class="t" style="left:3.6px;top:1.3px;font-size:5.8px;color:#f4f4f4">已添加</div><svg style="left:20px;top:0" width="25.4" height="44.8" viewBox="0 0 25.2 45.2" preserveAspectRatio="none"><use href="#girlR"/></svg><div class="t" style="left:49px;top:1.2px;font-size:5.6px;color:#f4f4f4">00:05</div></div>
  <div class="t" style="left:63.0px;top:237.0px;font-size:5.82px;color:#9b9b9b;">jimeng-...解动作.mp4</div>
</div>

<!-- ===== PLAYER PANEL ===== -->
<div id="player" class="panel" style="left:219px;top:20px;width:580px;height:385px;">
  <div class="phead"></div>
  <div class="t" style="left:7px;top:7px;font-size:6.6px;color:#e8e8e8">播放器</div>
  <svg style="left:563.5px;top:8.4px" width="7" height="6" viewBox="0 0 7 6"><path d="M0 0.5h7M0 3h7M0 5.5h7" stroke="#5c5c5c" stroke-width="0.8"/></svg>
  <div class="a" style="left:5px;top:25px;width:570px;height:320px;background:#3e5944"></div>
  <div class="a" style="left:5px;top:64px;width:570px;height:1px;background:#6d8a74"></div>
  <div class="a" style="left:5px;top:65px;width:570px;height:255px;background:#f1f1f1"></div>
  <div class="t" style="left:455.2px;top:37.9px;height:22px;line-height:22px;font-size:14.25px;font-weight:500;color:#fbfbfb;transform:scaleY(0.88);transform-origin:50% 50%;text-shadow:0.5px 0.7px 0.8px rgba(10,30,15,.7)">基础教育精品课</div>
  <!-- selection box -->
  <div class="a" style="left:31.6px;top:85.9px;width:144.6px;height:213px;border:0.8px solid rgba(226,226,226,.85)"></div>
  <div class="a hd" style="left:29.7px;top:84px"></div><div class="a hd" style="left:173.9px;top:84px"></div><div class="a hd" style="left:29.7px;top:296.6px"></div><div class="a hd" style="left:173.9px;top:296.6px"></div>
  <svg style="left:43px;top:92px" width="120" height="210"><use href="#girlBig"/></svg>
  <svg style="left:100.4px;top:307.6px" width="7" height="7" viewBox="0 0 7 7"><circle cx="3.5" cy="3.5" r="2.6" stroke="#2b2b2b" stroke-width="0.9" fill="none"/><path d="M4.6 0.2L6.2 1.2L4.8 2.3" stroke="#2b2b2b" stroke-width="0.7" fill="none"/></svg>
  <!-- controls -->
  <div class="t" style="left:4.8px;top:365px;font-size:6.05px;color:#12bccb">00:00:03:27</div>
  <div class="t" style="left:44px;top:365px;font-size:6.05px;color:#ececec">00:00:04:11</div>
  <div class="a" style="left:82px;top:366px;width:4.6px;height:8.4px;background:#2f2f2f"></div><div class="a" style="left:88px;top:366px;width:4.6px;height:8.4px;background:#2f2f2f"></div>
  <svg style="left:287.4px;top:366.4px" width="6" height="7.4" viewBox="0 0 6 7.4"><path d="M0.3 0.3L5.8 3.7L0.3 7.1z" fill="#ededed"/></svg>
  <div class="a" style="left:505.9px;top:366px;width:14px;height:8.2px;border:0.9px solid #cfcfcf;background:#474c52"></div>
  <div class="t" style="left:505.9px;width:14px;text-align:center;top:365.1px;font-size:4.8px;color:#f0f0f0">原画</div>
  <svg style="left:526.8px;top:365.2px" width="9.8" height="9.8" viewBox="0 0 9.4 9.4"><path d="M0.5 2.6V1.2a0.7 0.7 0 0 1 0.7-0.7h1.4M6.8 0.5h1.4a0.7 0.7 0 0 1 0.7 0.7v1.4M8.9 6.8v1.4a0.7 0.7 0 0 1-0.7 0.7H6.8M2.6 8.9H1.2a0.7 0.7 0 0 1-0.7-0.7V6.8" class="ic" stroke-width="0.9"/><circle cx="4.5" cy="4.5" r="2" class="ic" stroke-width="0.9"/><path d="M6 6L7 7" class="ic" stroke-width="0.9"/></svg>
  <div class="a" style="left:543.9px;top:366px;width:14.2px;height:8.2px;border:0.9px solid #cfcfcf;background:#33383f"></div>
  <div class="t" style="left:543.9px;width:14.2px;text-align:center;top:365.1px;font-size:5.6px;color:#f4f4f4">16:9</div>
  <svg style="left:567.4px;top:366.4px" width="8" height="8" viewBox="0 0 8 8"><path d="M4.8 0.5h2.7v2.7M7.3 0.7L4.6 3.4M3.2 7.5H0.5V4.8M0.7 7.3L3.4 4.6M0.5 2.6V0.5h2.1M7.5 5.4v2.1H5.4" class="ic" stroke-width="0.9"/></svg>
</div>

<!-- ===== RIGHT PANEL ===== -->
<div id="right" class="panel" style="left:803px;top:20px;width:272px;height:385px;">
  <div class="phead"></div>
  <div class="t" style="left:5.6px;top:7.8px;font-size:6.7px;color:#1ec8d6;font-weight:500;">画面</div>
  <div class="t" style="left:33.9px;top:7.8px;font-size:6.7px;color:#ececec;font-weight:500;">音频</div>
  <div class="t" style="left:62.0px;top:7.8px;font-size:6.7px;color:#ececec;font-weight:500;">变速</div>
  <div class="t" style="left:90.2px;top:7.8px;font-size:6.7px;color:#ececec;font-weight:500;">动画</div>
  <div class="t" style="left:118.2px;top:7.8px;font-size:6.7px;color:#ececec;font-weight:500;">跟踪</div>
  <div class="t" style="left:146.4px;top:7.8px;font-size:6.7px;color:#ececec;font-weight:500;">调节</div>
  <div class="t" style="left:174.8px;top:7.8px;font-size:6.7px;color:#ececec;font-weight:500;">AI效果</div>
  <div class="a" style="left:6.2px;top:31.4px;width:258.8px;height:13.5px;background:#1b1b1b;border-radius:2.5px;"></div>
  <div class="a" style="left:71.2px;top:31.4px;width:64.7px;height:13.5px;background:#3a3a3a;border-radius:2.5px;"></div>
  <div class="t" style="left:8.8px;width:60px;text-align:center;top:32.8px;font-size:6.2px;color:#ececec;">基础</div>
  <div class="t" style="left:73.4px;width:60px;text-align:center;top:32.8px;font-size:6.2px;color:#ececec;">抠像</div>
  <div class="t" style="left:138.1px;width:60px;text-align:center;top:32.8px;font-size:6.2px;color:#ececec;">蒙版</div>
  <div class="t" style="left:203.2px;width:60px;text-align:center;top:32.8px;font-size:6.2px;color:#ececec;">美颜美体</div>
  <div class="a" style="left:6.2px;top:51.4px;width:258.8px;height:0.8px;background:#353535;border-radius:0px;"></div>
  <div class="a" style="left:6.5px;top:63.9px;width:6.6px;height:6.6px;background:#4a4a4a;border-radius:1.5px;"></div>
  <div class="t" style="left:17.8px;top:62.3px;font-size:6.1px;color:#f2f2f2;font-weight:bold;">智能抠像</div>
  <svg style="left:45.5px;top:64.6px" width="6.6" height="5.4" viewBox="0 0 6 5"><path d="M1.2 0.2h3.6L6 1.7L3 4.9L0 1.7z" fill="#3fc3ee"/><path d="M0 1.7h6M2.1 1.7L3 4.8L3.9 1.7" stroke="#e8f8ff" stroke-width="0.5" fill="none"/></svg>
  <svg style="left:55.2px;top:66.1px" width="3.6" height="2.7" viewBox="0 0 3.6 2.7"><path d="M0 0.3h3.6L1.8 2.4z" fill="#9a9a9a"/></svg>
  <svg style="left:238.7px;top:63.7px" width="7.2" height="7.2" viewBox="0 0 7.2 7.2"><rect x="0.5" y="0.5" width="6.2" height="6.2" rx="0.8" stroke="#505050" stroke-width="0.9" fill="none"/><path d="M2.4 4.8L4.8 2.4M3.2 2.4h1.6v1.6" stroke="#505050" stroke-width="0.7" fill="none"/></svg>
  <svg style="left:256.1px;top:63.6px" width="7.4" height="7.4" viewBox="0 0 7.4 7.4"><path d="M1.2 2.2A3 3 0 1 1 0.8 4.4" stroke="#505050" stroke-width="0.9" fill="none" stroke-linecap="round"/><path d="M0.6 0.8L1.1 2.5L2.8 2.2" stroke="#505050" stroke-width="0.8" fill="none" stroke-linecap="round" stroke-linejoin="round"/></svg>
  <div class="a" style="left:6.2px;top:80.1px;width:258.8px;height:0.8px;background:#353535;border-radius:0px;"></div>
  <div class="a" style="left:6.5px;top:90.4px;width:6.6px;height:6.6px;background:#4a4a4a;border-radius:1.5px;"></div>
  <div class="t" style="left:17.8px;top:88.8px;font-size:6.1px;color:#f2f2f2;font-weight:bold;">自定义抠像</div>
  <svg style="left:51.4px;top:92.5px" width="3.6" height="2.7" viewBox="0 0 3.6 2.7"><path d="M0 0.3h3.6L1.8 2.4z" fill="#9a9a9a"/></svg>
  <svg style="left:238.7px;top:90.0px" width="7.2" height="7.2" viewBox="0 0 7.2 7.2"><rect x="0.5" y="0.5" width="6.2" height="6.2" rx="0.8" stroke="#505050" stroke-width="0.9" fill="none"/><path d="M2.4 4.8L4.8 2.4M3.2 2.4h1.6v1.6" stroke="#505050" stroke-width="0.7" fill="none"/></svg>
  <svg style="left:256.1px;top:89.9px" width="7.4" height="7.4" viewBox="0 0 7.4 7.4"><path d="M1.2 2.2A3 3 0 1 1 0.8 4.4" stroke="#505050" stroke-width="0.9" fill="none" stroke-linecap="round"/><path d="M0.6 0.8L1.1 2.5L2.8 2.2" stroke="#505050" stroke-width="0.8" fill="none" stroke-linecap="round" stroke-linejoin="round"/></svg>
  <div class="a" style="left:6.2px;top:106.0px;width:258.8px;height:0.8px;background:#353535;border-radius:0px;"></div>
  <div class="a" style="left:6.5px;top:116.7px;width:6.6px;height:6.6px;background:#10c2d2;border-radius:1.5px;"></div>
  <svg style="left:7.9px;top:118.4px" width="4" height="3.2" viewBox="0 0 4 3.2"><path d="M0.4 1.6L1.5 2.7L3.6 0.5" stroke="#fff" stroke-width="0.8" fill="none"/></svg>
  <div class="t" style="left:17.8px;top:115.1px;font-size:6.1px;color:#f2f2f2;font-weight:bold;">色度抠图</div>
  <svg style="left:44.8px;top:118.7px" width="3.6" height="2.7" viewBox="0 0 3.6 2.7"><path d="M0 2.4h3.6L1.8 0.3z" fill="#cfcfcf"/></svg>
  <svg style="left:232.7px;top:116.3px" width="7.4" height="7.4" viewBox="0 0 7.4 7.4"><path d="M1.2 2.2A3 3 0 1 1 0.8 4.4" stroke="#f0f0f0" stroke-width="0.9" fill="none" stroke-linecap="round"/><path d="M0.6 0.8L1.1 2.5L2.8 2.2" stroke="#f0f0f0" stroke-width="0.8" fill="none" stroke-linecap="round" stroke-linejoin="round"/></svg>
  <svg style="left:246.6px;top:116.0px" width="19" height="8" viewBox="0 0 19 8"><path d="M2.6 1.6L0.8 4L2.6 6.4" stroke="#4f4f4f" stroke-width="0.7" fill="none"/><path d="M9.3 0.8L12.5 4L9.3 7.2L6.1 4z" stroke="#e0e0e0" stroke-width="0.9" fill="none" stroke-linejoin="round"/><path d="M16.4 1.6L18.2 4L16.4 6.4" stroke="#4f4f4f" stroke-width="0.7" fill="none"/></svg>
  <div class="t" style="left:6.6px;top:135.0px;font-size:6.1px;color:#e6e6e6;">取色器</div>
  <div class="a" style="left:27.3px;top:133.6px;width:12.1px;height:12.4px;background:#3a3a3a;border-radius:2px;"></div>
  <svg style="left:29.8px;top:136.2px" width="7.2" height="7.2" viewBox="0 0 7.2 7.2"><path d="M0.6 6.6L1 5L4 2L5.2 3.2L2.2 6.2z" stroke="#f0f0f0" stroke-width="0.7" fill="none" stroke-linejoin="round"/><path d="M3.6 1.6L5.6 3.6M4.6 2.6L5.9 1.3A0.9 0.9 0 0 0 4.6 0" stroke="#f0f0f0" stroke-width="1.1" fill="none" stroke-linecap="round"/></svg>
  <div class="a" style="left:42.1px;top:133.6px;width:12.2px;height:12.4px;background:#4fd07c;border-radius:2px;"></div>
  <div class="t" style="right:6.7px;top:136.2px;font-size:6.15px;color:#6e6e6e">*先吸取画面颜色，再调节强度</div>
  <div class="t" style="left:6.6px;top:157.8px;font-size:6.1px;color:#e6e6e6;">强度</div>
  <div class="a" style="left:52.7px;top:162.1px;width:141.3px;height:1.0px;background:#4a4a4a;border-radius:0px;"></div>
  <div class="a" style="left:52.7px;top:162.0px;width:29.6px;height:1.2px;background:#f4f4f4;border-radius:0px;"></div>
  <div class="a" style="left:80.0px;top:159.2px;width:4.6px;height:7.0px;background:#f6f6f6;border-radius:1.6px;"></div>
  <div class="a" style="left:204.4px;top:156.6px;width:30.6px;height:12.2px;background:#1b1b1b;border-radius:2px;"></div>
  <div class="t" style="left:204.6px;width:30px;text-align:center;top:157.8px;font-size:6px;color:#f2f2f2;">20</div>
  <div class="a" style="left:235.9px;top:156.6px;width:8.8px;height:12.2px;background:#363636;border-radius:2px;"></div>
  <svg style="left:238.3px;top:158.6px" width="4" height="8" viewBox="0 0 4 8"><path d="M0.4 2.6L2 1L3.6 2.6M0.4 5.4L2 7L3.6 5.4" stroke="#f0f0f0" stroke-width="0.8" fill="none"/></svg>
  <svg style="left:246.6px;top:158.6px" width="19" height="8" viewBox="0 0 19 8"><path d="M2.6 1.6L0.8 4L2.6 6.4" stroke="#4f4f4f" stroke-width="0.7" fill="none"/><path d="M9.3 0.8L12.5 4L9.3 7.2L6.1 4z" stroke="#e0e0e0" stroke-width="0.9" fill="none" stroke-linejoin="round"/><path d="M16.4 1.6L18.2 4L16.4 6.4" stroke="#4f4f4f" stroke-width="0.7" fill="none"/></svg>
  <div class="t" style="left:6.6px;top:181.4px;font-size:6.1px;color:#e6e6e6;">阴影</div>
  <div class="a" style="left:52.7px;top:185.7px;width:141.3px;height:1.0px;background:#4a4a4a;border-radius:0px;"></div>
  <div class="a" style="left:52.6px;top:182.8px;width:4.6px;height:7.0px;background:#f6f6f6;border-radius:1.6px;"></div>
  <div class="a" style="left:204.4px;top:180.2px;width:30.6px;height:12.2px;background:#1b1b1b;border-radius:2px;"></div>
  <div class="t" style="left:204.6px;width:30px;text-align:center;top:181.4px;font-size:6px;color:#f2f2f2;">0</div>
  <div class="a" style="left:235.9px;top:180.2px;width:8.8px;height:12.2px;background:#363636;border-radius:2px;"></div>
  <svg style="left:238.3px;top:182.2px" width="4" height="8" viewBox="0 0 4 8"><path d="M0.4 2.6L2 1L3.6 2.6M0.4 5.4L2 7L3.6 5.4" stroke="#f0f0f0" stroke-width="0.8" fill="none"/></svg>
  <svg style="left:246.6px;top:182.2px" width="19" height="8" viewBox="0 0 19 8"><path d="M2.6 1.6L0.8 4L2.6 6.4" stroke="#4f4f4f" stroke-width="0.7" fill="none"/><path d="M9.3 0.8L12.5 4L9.3 7.2L6.1 4z" stroke="#e0e0e0" stroke-width="0.9" fill="none" stroke-linejoin="round"/><path d="M16.4 1.6L18.2 4L16.4 6.4" stroke="#4f4f4f" stroke-width="0.7" fill="none"/></svg>
  <div class="t" style="left:6.6px;top:205.0px;font-size:6.1px;color:#e6e6e6;">边缘羽化</div>
  <svg style="left:34.0px;top:207.2px" width="6.6" height="5.4" viewBox="0 0 6 5"><path d="M1.2 0.2h3.6L6 1.7L3 4.9L0 1.7z" fill="#3fc3ee"/><path d="M0 1.7h6M2.1 1.7L3 4.8L3.9 1.7" stroke="#e8f8ff" stroke-width="0.5" fill="none"/></svg>
  <div class="a" style="left:52.7px;top:209.3px;width:141.3px;height:1.0px;background:#4a4a4a;border-radius:0px;"></div>
  <div class="a" style="left:52.6px;top:206.4px;width:4.6px;height:7.0px;background:#f6f6f6;border-radius:1.6px;"></div>
  <div class="a" style="left:204.4px;top:203.8px;width:30.6px;height:12.2px;background:#1b1b1b;border-radius:2px;"></div>
  <div class="t" style="left:204.6px;width:30px;text-align:center;top:205.0px;font-size:6px;color:#f2f2f2;">0</div>
  <div class="a" style="left:235.9px;top:203.8px;width:8.8px;height:12.2px;background:#363636;border-radius:2px;"></div>
  <svg style="left:238.3px;top:205.8px" width="4" height="8" viewBox="0 0 4 8"><path d="M0.4 2.6L2 1L3.6 2.6M0.4 5.4L2 7L3.6 5.4" stroke="#f0f0f0" stroke-width="0.8" fill="none"/></svg>
  <svg style="left:246.6px;top:205.8px" width="19" height="8" viewBox="0 0 19 8"><path d="M2.6 1.6L0.8 4L2.6 6.4" stroke="#4f4f4f" stroke-width="0.7" fill="none"/><path d="M9.3 0.8L12.5 4L9.3 7.2L6.1 4z" stroke="#e0e0e0" stroke-width="0.9" fill="none" stroke-linejoin="round"/><path d="M16.4 1.6L18.2 4L16.4 6.4" stroke="#4f4f4f" stroke-width="0.7" fill="none"/></svg>
  <div class="t" style="left:6.6px;top:228.6px;font-size:6.1px;color:#e6e6e6;">边缘清除</div>
  <svg style="left:34.0px;top:230.8px" width="6.6" height="5.4" viewBox="0 0 6 5"><path d="M1.2 0.2h3.6L6 1.7L3 4.9L0 1.7z" fill="#3fc3ee"/><path d="M0 1.7h6M2.1 1.7L3 4.8L3.9 1.7" stroke="#e8f8ff" stroke-width="0.5" fill="none"/></svg>
  <div class="a" style="left:52.7px;top:232.9px;width:141.3px;height:1.0px;background:#4a4a4a;border-radius:0px;"></div>
  <div class="a" style="left:52.6px;top:230.0px;width:4.6px;height:7.0px;background:#f6f6f6;border-radius:1.6px;"></div>
  <div class="a" style="left:204.4px;top:227.4px;width:30.6px;height:12.2px;background:#1b1b1b;border-radius:2px;"></div>
  <div class="t" style="left:204.6px;width:30px;text-align:center;top:228.6px;font-size:6px;color:#f2f2f2;">0</div>
  <div class="a" style="left:235.9px;top:227.4px;width:8.8px;height:12.2px;background:#363636;border-radius:2px;"></div>
  <svg style="left:238.3px;top:229.4px" width="4" height="8" viewBox="0 0 4 8"><path d="M0.4 2.6L2 1L3.6 2.6M0.4 5.4L2 7L3.6 5.4" stroke="#f0f0f0" stroke-width="0.8" fill="none"/></svg>
  <svg style="left:246.6px;top:229.4px" width="19" height="8" viewBox="0 0 19 8"><path d="M2.6 1.6L0.8 4L2.6 6.4" stroke="#4f4f4f" stroke-width="0.7" fill="none"/><path d="M9.3 0.8L12.5 4L9.3 7.2L6.1 4z" stroke="#e0e0e0" stroke-width="0.9" fill="none" stroke-linejoin="round"/><path d="M16.4 1.6L18.2 4L16.4 6.4" stroke="#4f4f4f" stroke-width="0.7" fill="none"/></svg>
</div>

<!-- ===== TIMELINE ===== -->
<div id="timeline" class="a" style="left:5px;top:408px;width:1070px;height:166px;background:#252525;overflow:hidden">
  <div class="a" style="left:0.0px;top:0.0px;width:1070.0px;height:18.6px;background:#272727;border-radius:0px;"></div>
  <div class="a" style="left:0.0px;top:18.4px;width:1070.0px;height:0.8px;background:#1b1b1b;border-radius:0px;"></div>
  <svg style="left:4.9px;top:4.7px" width="8" height="9" viewBox="0 0 8 9"><path d="M1 0.8L1.2 7.4L3 5.8L4.4 8.4L5.6 7.8L4.3 5.3L6.8 5z" stroke="#dedede" stroke-width="0.9" fill="none" stroke-linecap="round" stroke-linejoin="round"/></svg>
  <svg style="left:19.9px;top:8.4px" width="4" height="2.8" viewBox="0 0 4 2.8"><path d="M0.4 0.5L2 2.2L3.6 0.5" stroke="#dedede" stroke-width="0.9" fill="none" stroke-linecap="round" stroke-linejoin="round"/></svg>
  <div class="a" style="left:31.3px;top:4.6px;width:0.7px;height:8.0px;background:#303030;border-radius:0px;"></div>
  <svg style="left:39.5px;top:5.7px" width="8" height="7" viewBox="0 0 8 7"><path d="M2.6 0.6L0.7 2.4L2.6 4.2M0.9 2.4H5A2 2 0 0 1 5 6.4H1.6" stroke="#dedede" stroke-width="0.9" fill="none" stroke-linecap="round" stroke-linejoin="round"/></svg>
  <svg style="left:59.5px;top:5.7px" width="8" height="7" viewBox="0 0 8 7"><path d="M5.4 0.6L7.3 2.4L5.4 4.2M7.1 2.4H3A2 2 0 0 0 3 6.4H6.4" stroke="#5a5a5a" stroke-width="0.9" fill="none" stroke-linecap="round" stroke-linejoin="round"/></svg>
  <svg style="left:80.1px;top:5.2px" width="7" height="8" viewBox="0 0 7 8"><path d="M1.6 1.2C2.9 2.8 2.9 5.2 1.6 6.8H5.4C4.1 5.2 4.1 2.8 5.4 1.2z" fill="#8a8a8a" opacity=".55"/><path d="M0.8 0.5C2.9 2.4 2.9 5.6 0.8 7.5" stroke="#dedede" stroke-width="1" fill="none" stroke-linecap="round" stroke-linejoin="round"/><path d="M6.2 0.5C4.1 2.4 4.1 5.6 6.2 7.5" stroke="#dedede" stroke-width="1" fill="none" stroke-linecap="round" stroke-linejoin="round"/></svg>
  <svg style="left:100.8px;top:5.2px" width="7" height="8" viewBox="0 0 7 8"><path d="M0.8 0.5C2.9 2.4 2.9 5.6 0.8 7.5" stroke="#6a6a6a" stroke-width="1.2" fill="none" stroke-linecap="round" stroke-linejoin="round"/><path d="M6.2 0.5C4.1 2.4 4.1 5.6 6.2 7.5" stroke="#dedede" stroke-width="1" fill="none" stroke-linecap="round" stroke-linejoin="round"/></svg>
  <svg style="left:120.8px;top:5.2px" width="7" height="8" viewBox="0 0 7 8"><path d="M0.8 0.5C2.9 2.4 2.9 5.6 0.8 7.5" stroke="#dedede" stroke-width="1" fill="none" stroke-linecap="round" stroke-linejoin="round"/><path d="M6.2 0.5C4.1 2.4 4.1 5.6 6.2 7.5" stroke="#6a6a6a" stroke-width="1.2" fill="none" stroke-linecap="round" stroke-linejoin="round"/></svg>
  <svg style="left:140.6px;top:5.0px" width="8" height="8.4" viewBox="0 0 8 8.4"><path d="M0.6 1.8H7.4M2.8 1.8V0.6H5.2V1.8M1.4 1.8V7.8H6.6V1.8" stroke="#dedede" stroke-width="1" fill="none" stroke-linecap="round" stroke-linejoin="round"/></svg>
  <svg style="left:160.8px;top:5.2px" width="8" height="8" viewBox="0 0 8 8"><path d="M0.8 1.2H5M0.8 1.2V4.4C0.8 6 2.4 7 4 7.6C5.6 7 7.2 6 7.2 4.4V2.8M6.2 0.4V2.6M5.1 1.5H7.3" stroke="#dedede" stroke-width="0.9" fill="none" stroke-linecap="round" stroke-linejoin="round"/></svg>
  <svg style="left:181.2px;top:5.2px" width="8" height="8" viewBox="0 0 8 8"><path d="M0.8 1.2H7.2V4.4C7.2 6 5.6 7 4 7.6C2.4 7 0.8 6 0.8 4.4z" stroke="#dedede" stroke-width="0.9" fill="none" stroke-linecap="round" stroke-linejoin="round"/></svg>
  <svg style="left:200.9px;top:5.2px" width="9" height="8" viewBox="0 0 9 8"><path d="M2.6 0.8H6.4V7.2H2.6zM0.6 1.6V6.4M8.4 1.6V6.4" stroke="#dedede" stroke-width="0.9" fill="none" stroke-linecap="round" stroke-linejoin="round"/></svg>
  <svg style="left:221.5px;top:5.0px" width="8.4" height="8.4" viewBox="0 0 8.4 8.4"><path d="M7.4 2.4A3.6 3.6 0 1 0 7.8 4.6M7.6 0.8V2.6H5.8" stroke="#dedede" stroke-width="0.9" fill="none" stroke-linecap="round" stroke-linejoin="round"/><path d="M3.4 2.8V5.8L5.8 4.3z" stroke="#dedede" stroke-width="0.8" fill="none" stroke-linecap="round" stroke-linejoin="round"/></svg>
  <svg style="left:241.6px;top:5.0px" width="9" height="8.4" viewBox="0 0 9 8.4"><path d="M3.6 0.8V7.4H0.6zM5.4 0.8V7.4H8.4z" stroke="#dedede" stroke-width="0.9" fill="none" stroke-linecap="round" stroke-linejoin="round"/></svg>
  <svg style="left:261.6px;top:4.7px" width="9" height="9" viewBox="0 0 9 9"><path d="M4.5 0.8L7.6 2.4L6.8 5.8M7.6 6.6L4.5 8.2L1.4 6.6L2.2 3.2M1.4 2.4L3 1.6" stroke="#dedede" stroke-width="0.9" fill="none" stroke-linecap="round" stroke-linejoin="round"/></svg>
  <svg style="left:281.8px;top:4.7px" width="9" height="9" viewBox="0 0 9 9"><path d="M2.2 0.4V6.8H8.6M0.4 2.2H6.8V8.6" stroke="#dedede" stroke-width="0.9" fill="none" stroke-linecap="round" stroke-linejoin="round"/></svg>
  <svg style="left:301.5px;top:5.6px" width="9" height="8" viewBox="0 0 9 8"><path d="M0.6 0.8H7.4V4M0.6 0.8V6.4H4.6M2 3H6M2 4.8H4M6 5.6L8.2 7.8M8.2 5.6L6 7.8" stroke="#dedede" stroke-width="0.9" fill="none" stroke-linecap="round" stroke-linejoin="round"/></svg>
  <svg style="left:321.7px;top:5.6px" width="9" height="8" viewBox="0 0 9 8"><path d="M0.6 1.6H3.4V6.4H0.6zM3.4 1.6L5.4 0.6V7.4L3.4 6.4M7.4 1.4V5M7.4 6.8V7" stroke="#dedede" stroke-width="0.9" fill="none" stroke-linecap="round" stroke-linejoin="round"/></svg>
  <div class="a" style="left:306.3px;top:0.3px;width:14.0px;height:6.2px;background:linear-gradient(90deg,#4fd0e4,#f3b6e6);border-radius:2px;"></div>
  <div class="t" style="left:306.3px;width:14px;text-align:center;top:-1.6px;font-size:4.6px;color:#1c2a33;font-weight:bold">限免</div>
  <div class="a" style="left:326.6px;top:0.3px;width:14.0px;height:6.2px;background:linear-gradient(90deg,#4fd0e4,#f3b6e6);border-radius:2px;"></div>
  <div class="t" style="left:326.6px;width:14px;text-align:center;top:-1.6px;font-size:4.6px;color:#1c2a33;font-weight:bold">限免</div>
  <svg style="left:824.5px;top:3.9px" width="7" height="10.4" viewBox="0 0 7 10.4"><rect x="2" y="0.5" width="3" height="5.6" rx="1.5" fill="#9a9a9a" stroke="#e0e0e0" stroke-width="0.7"/><path d="M0.6 4.6C0.6 8 6.4 8 6.4 4.6M3.5 7.2V9.2M1.6 9.6H5.4" stroke="#e0e0e0" stroke-width="0.8" fill="none" stroke-linecap="round"/></svg>
  <div class="a" style="left:841.6px;top:4.6px;width:0.7px;height:8.0px;background:#303030;border-radius:0px;"></div>
  <div class="a" style="left:848.7px;top:2.4px;width:13.7px;height:13.0px;background:#1a1a1a;border-radius:2px;"></div>
  <div class="a" style="left:869.2px;top:2.4px;width:13.6px;height:13.0px;background:#1a1a1a;border-radius:2px;"></div>
  <div class="a" style="left:889.4px;top:2.4px;width:21.4px;height:13.0px;background:#1a1a1a;border-radius:2px;"></div>
  <div class="a" style="left:917.4px;top:2.4px;width:21.4px;height:13.0px;background:#1a1a1a;border-radius:2px;"></div>
  <div class="a" style="left:903.6px;top:2.4px;width:0.6px;height:13.0px;background:#272727;border-radius:0px;"></div>
  <div class="a" style="left:931.6px;top:2.4px;width:0.6px;height:13.0px;background:#272727;border-radius:0px;"></div>
  <svg style="left:850.2px;top:6.9px" width="10.6" height="4.4" viewBox="0 0 10.6 4.4"><rect x="0" y="0.3" width="4.4" height="3.8" rx="0.5" fill="#15c5d5"/><rect x="6.2" y="0.3" width="4.4" height="3.8" rx="0.5" fill="#15c5d5"/><path d="M3 2.2H8" stroke="#15c5d5" stroke-width="1.6"/><path d="M3.6 2.2H7" stroke="#0b5a62" stroke-width="0.6"/></svg>
  <svg style="left:870.5px;top:4.6px" width="10.6" height="9" viewBox="0 0 10.6 9"><rect x="0" y="2.7" width="10.6" height="3.7" rx="0.5" fill="#15c5d5"/><path d="M5.3 2.7V6.4" stroke="#0b5a62" stroke-width="0.7"/><path d="M5.3 0.4V1.6M3.6 1L4.2 1.8M7 1L6.4 1.8M5.3 7.4V8.6M3.6 8L4.2 7.2M7 8L6.4 7.2" stroke="#15c5d5" stroke-width="0.55"/></svg>
  <svg style="left:890.9px;top:6.9px" width="10.6" height="4.4" viewBox="0 0 10.6 4.4"><rect x="0" y="0.3" width="10.6" height="3.8" rx="0.5" fill="#15c5d5"/><path d="M3.6 2.2H7" stroke="#0b5a62" stroke-width="0.7"/><circle cx="3.4" cy="2.2" r="0.8" fill="#0b5a62"/><circle cx="7.2" cy="2.2" r="0.8" fill="#0b5a62"/></svg>
  <svg style="left:905.4px;top:8.2px" width="4" height="2.8" viewBox="0 0 4 2.8"><path d="M0.4 0.5L2 2.2L3.6 0.5" stroke="#e8e8e8" stroke-width="0.9" fill="none" stroke-linecap="round" stroke-linejoin="round"/></svg>
  <svg style="left:918.9px;top:4.9px" width="10.6" height="8.4" viewBox="0 0 10.6 8.4"><rect x="0" y="2.3" width="4.6" height="3.8" rx="0.4" fill="#15c5d5"/><rect x="6.6" y="2.3" width="4" height="3.8" rx="0.4" fill="#15c5d5"/><path d="M5.6 0.2V8.2" stroke="#15c5d5" stroke-width="0.8"/><path d="M6.4 3.2L9.4 5L8 5.4L8.8 7.2L8 7.6L7.2 5.8L6.4 6.8z" fill="#15c5d5" stroke="#1a1a1a" stroke-width="0.35"/></svg>
  <svg style="left:933.4px;top:8.2px" width="4" height="2.8" viewBox="0 0 4 2.8"><path d="M0.4 0.5L2 2.2L3.6 0.5" stroke="#e8e8e8" stroke-width="0.9" fill="none" stroke-linecap="round" stroke-linejoin="round"/></svg>
  <div class="a" style="left:945.2px;top:4.6px;width:0.7px;height:8.0px;background:#303030;border-radius:0px;"></div>
  <svg style="left:953.7px;top:5.2px" width="11" height="8" viewBox="0 0 11 8"><path d="M0.6 0.8H10.4V5.6H7.4M0.6 0.8V5.6H4M2.4 0.8L3.6 3.4L5 1.6L6.4 3.4" stroke="#d8d8d8" stroke-width="0.8" fill="none" stroke-linecap="round" stroke-linejoin="round"/><path d="M4.2 5.2C4.2 4 7.2 4 7.2 5.2C7.2 6.4 6 7.4 5.7 7.6C5.4 7.4 4.2 6.4 4.2 5.2z" stroke="#d8d8d8" stroke-width="0.8" fill="none" stroke-linecap="round" stroke-linejoin="round"/></svg>
  <svg style="left:975.8px;top:5.2px" width="8" height="8" viewBox="0 0 8 8"><path d="M7 4A3 3 0 1 1 1 4A3 3 0 1 1 7 4M2.8 4H5.2" stroke="#d8d8d8" stroke-width="0.8" fill="none" stroke-linecap="round" stroke-linejoin="round"/></svg>
  <div class="a" style="left:995.0px;top:8.9px;width:52.0px;height:1.0px;background:#0e0e0e;border-radius:0px;"></div>
  <div class="a" style="left:994.6px;top:5.8px;width:5.0px;height:6.8px;background:#f6f6f6;border-radius:1.8px;"></div>
  <svg style="left:1057.0px;top:5.2px" width="8" height="8" viewBox="0 0 8 8"><path d="M7 4A3 3 0 1 1 1 4A3 3 0 1 1 7 4" stroke="#d8d8d8" stroke-width="0.8" fill="none" stroke-linecap="round" stroke-linejoin="round"/><circle cx="4" cy="4" r="1.1" fill="#d8d8d8"/><path d="M6.2 6.2L7.4 7.4" stroke="#d8d8d8" stroke-width="0.8" fill="none" stroke-linecap="round" stroke-linejoin="round"/></svg>
  <div class="a" style="left:98.2px;top:19.2px;width:279.6px;height:0.9px;background:#40360f;border-radius:0px;"></div>
  <div class="a" style="left:97.8px;top:19.8px;width:0.8px;height:7px;background:#4c4c4c;border-radius:0px;"></div>
  <div class="t" style="left:100.4px;top:18.9px;font-size:5.6px;color:#5c5c5c;">00:00</div>
  
  <div class="a" style="left:123.5px;top:20.2px;width:0.7px;height:3.4px;background:#393939;border-radius:0px;"></div>
  <div class="a" style="left:136.2px;top:20.2px;width:0.7px;height:3.4px;background:#393939;border-radius:0px;"></div>
  <div class="a" style="left:149.0px;top:20.2px;width:0.7px;height:3.4px;background:#393939;border-radius:0px;"></div>
  <div class="a" style="left:161.8px;top:20.2px;width:0.7px;height:3.4px;background:#393939;border-radius:0px;"></div>
  <div class="a" style="left:174.6px;top:20.2px;width:0.7px;height:3.4px;background:#393939;border-radius:0px;"></div>
  <div class="a" style="left:187.4px;top:20.2px;width:0.7px;height:3.4px;background:#393939;border-radius:0px;"></div>
  <div class="a" style="left:200.1px;top:20.2px;width:0.7px;height:3.4px;background:#393939;border-radius:0px;"></div>
  <div class="a" style="left:212.9px;top:20.2px;width:0.7px;height:3.4px;background:#393939;border-radius:0px;"></div>
  <div class="a" style="left:225.6px;top:19.8px;width:0.8px;height:7px;background:#4c4c4c;border-radius:0px;"></div>
  <div class="t" style="left:228.2px;top:18.9px;font-size:5.6px;color:#5c5c5c;">00:02</div>
  
  <div class="a" style="left:251.3px;top:20.2px;width:0.7px;height:3.4px;background:#393939;border-radius:0px;"></div>
  <div class="a" style="left:264.0px;top:20.2px;width:0.7px;height:3.4px;background:#393939;border-radius:0px;"></div>
  <div class="a" style="left:276.8px;top:20.2px;width:0.7px;height:3.4px;background:#393939;border-radius:0px;"></div>
  <div class="a" style="left:289.6px;top:20.2px;width:0.7px;height:3.4px;background:#393939;border-radius:0px;"></div>
  <div class="a" style="left:302.4px;top:20.2px;width:0.7px;height:3.4px;background:#393939;border-radius:0px;"></div>
  <div class="a" style="left:315.2px;top:20.2px;width:0.7px;height:3.4px;background:#393939;border-radius:0px;"></div>
  <div class="a" style="left:327.9px;top:20.2px;width:0.7px;height:3.4px;background:#393939;border-radius:0px;"></div>
  <div class="a" style="left:340.7px;top:20.2px;width:0.7px;height:3.4px;background:#393939;border-radius:0px;"></div>
  <div class="a" style="left:353.4px;top:19.8px;width:0.8px;height:7px;background:#4c4c4c;border-radius:0px;"></div>
  <div class="t" style="left:356.0px;top:18.9px;font-size:5.6px;color:#5c5c5c;">00:04</div>
  
  <div class="a" style="left:379.1px;top:20.2px;width:0.7px;height:3.4px;background:#393939;border-radius:0px;"></div>
  <div class="a" style="left:391.8px;top:20.2px;width:0.7px;height:3.4px;background:#393939;border-radius:0px;"></div>
  <div class="a" style="left:404.6px;top:20.2px;width:0.7px;height:3.4px;background:#393939;border-radius:0px;"></div>
  <div class="a" style="left:417.4px;top:20.2px;width:0.7px;height:3.4px;background:#393939;border-radius:0px;"></div>
  <div class="a" style="left:430.2px;top:20.2px;width:0.7px;height:3.4px;background:#393939;border-radius:0px;"></div>
  <div class="a" style="left:443.0px;top:20.2px;width:0.7px;height:3.4px;background:#393939;border-radius:0px;"></div>
  <div class="a" style="left:455.7px;top:20.2px;width:0.7px;height:3.4px;background:#393939;border-radius:0px;"></div>
  <div class="a" style="left:468.5px;top:20.2px;width:0.7px;height:3.4px;background:#393939;border-radius:0px;"></div>
  <div class="a" style="left:481.2px;top:19.8px;width:0.8px;height:7px;background:#4c4c4c;border-radius:0px;"></div>
  <div class="t" style="left:483.8px;top:18.9px;font-size:5.6px;color:#5c5c5c;">00:06</div>
  
  <div class="a" style="left:506.9px;top:20.2px;width:0.7px;height:3.4px;background:#393939;border-radius:0px;"></div>
  <div class="a" style="left:519.6px;top:20.2px;width:0.7px;height:3.4px;background:#393939;border-radius:0px;"></div>
  <div class="a" style="left:532.4px;top:20.2px;width:0.7px;height:3.4px;background:#393939;border-radius:0px;"></div>
  <div class="a" style="left:545.2px;top:20.2px;width:0.7px;height:3.4px;background:#393939;border-radius:0px;"></div>
  <div class="a" style="left:558.0px;top:20.2px;width:0.7px;height:3.4px;background:#393939;border-radius:0px;"></div>
  <div class="a" style="left:570.8px;top:20.2px;width:0.7px;height:3.4px;background:#393939;border-radius:0px;"></div>
  <div class="a" style="left:583.5px;top:20.2px;width:0.7px;height:3.4px;background:#393939;border-radius:0px;"></div>
  <div class="a" style="left:596.3px;top:20.2px;width:0.7px;height:3.4px;background:#393939;border-radius:0px;"></div>
  <div class="a" style="left:609.0px;top:19.8px;width:0.8px;height:7px;background:#4c4c4c;border-radius:0px;"></div>
  <div class="t" style="left:611.6px;top:18.9px;font-size:5.6px;color:#5c5c5c;">00:08</div>
  
  <div class="a" style="left:634.7px;top:20.2px;width:0.7px;height:3.4px;background:#393939;border-radius:0px;"></div>
  <div class="a" style="left:647.4px;top:20.2px;width:0.7px;height:3.4px;background:#393939;border-radius:0px;"></div>
  <div class="a" style="left:660.2px;top:20.2px;width:0.7px;height:3.4px;background:#393939;border-radius:0px;"></div>
  <div class="a" style="left:673.0px;top:20.2px;width:0.7px;height:3.4px;background:#393939;border-radius:0px;"></div>
  <div class="a" style="left:685.8px;top:20.2px;width:0.7px;height:3.4px;background:#393939;border-radius:0px;"></div>
  <div class="a" style="left:698.6px;top:20.2px;width:0.7px;height:3.4px;background:#393939;border-radius:0px;"></div>
  <div class="a" style="left:711.3px;top:20.2px;width:0.7px;height:3.4px;background:#393939;border-radius:0px;"></div>
  <div class="a" style="left:724.1px;top:20.2px;width:0.7px;height:3.4px;background:#393939;border-radius:0px;"></div>
  <div class="a" style="left:736.8px;top:19.8px;width:0.8px;height:7px;background:#4c4c4c;border-radius:0px;"></div>
  <div class="t" style="left:739.4px;top:18.9px;font-size:5.6px;color:#5c5c5c;">00:10</div>
  
  <div class="a" style="left:762.5px;top:20.2px;width:0.7px;height:3.4px;background:#393939;border-radius:0px;"></div>
  <div class="a" style="left:775.2px;top:20.2px;width:0.7px;height:3.4px;background:#393939;border-radius:0px;"></div>
  <div class="a" style="left:788.0px;top:20.2px;width:0.7px;height:3.4px;background:#393939;border-radius:0px;"></div>
  <div class="a" style="left:800.8px;top:20.2px;width:0.7px;height:3.4px;background:#393939;border-radius:0px;"></div>
  <div class="a" style="left:813.6px;top:20.2px;width:0.7px;height:3.4px;background:#393939;border-radius:0px;"></div>
  <div class="a" style="left:826.4px;top:20.2px;width:0.7px;height:3.4px;background:#393939;border-radius:0px;"></div>
  <div class="a" style="left:839.1px;top:20.2px;width:0.7px;height:3.4px;background:#393939;border-radius:0px;"></div>
  <div class="a" style="left:851.9px;top:20.2px;width:0.7px;height:3.4px;background:#393939;border-radius:0px;"></div>
  <div class="a" style="left:864.6px;top:19.8px;width:0.8px;height:7px;background:#4c4c4c;border-radius:0px;"></div>
  <div class="t" style="left:867.2px;top:18.9px;font-size:5.6px;color:#5c5c5c;">00:12</div>
  
  <div class="a" style="left:890.3px;top:20.2px;width:0.7px;height:3.4px;background:#393939;border-radius:0px;"></div>
  <div class="a" style="left:903.0px;top:20.2px;width:0.7px;height:3.4px;background:#393939;border-radius:0px;"></div>
  <div class="a" style="left:915.8px;top:20.2px;width:0.7px;height:3.4px;background:#393939;border-radius:0px;"></div>
  <div class="a" style="left:928.6px;top:20.2px;width:0.7px;height:3.4px;background:#393939;border-radius:0px;"></div>
  <div class="a" style="left:941.4px;top:20.2px;width:0.7px;height:3.4px;background:#393939;border-radius:0px;"></div>
  <div class="a" style="left:954.2px;top:20.2px;width:0.7px;height:3.4px;background:#393939;border-radius:0px;"></div>
  <div class="a" style="left:966.9px;top:20.2px;width:0.7px;height:3.4px;background:#393939;border-radius:0px;"></div>
  <div class="a" style="left:979.7px;top:20.2px;width:0.7px;height:3.4px;background:#393939;border-radius:0px;"></div>
  <div class="a" style="left:992.4px;top:19.8px;width:0.8px;height:7px;background:#4c4c4c;border-radius:0px;"></div>
  <div class="t" style="left:995.0px;top:18.9px;font-size:5.6px;color:#5c5c5c;">00:14</div>
  
  <div class="a" style="left:1018.1px;top:20.2px;width:0.7px;height:3.4px;background:#393939;border-radius:0px;"></div>
  <div class="a" style="left:1030.8px;top:20.2px;width:0.7px;height:3.4px;background:#393939;border-radius:0px;"></div>
  <div class="a" style="left:1043.6px;top:20.2px;width:0.7px;height:3.4px;background:#393939;border-radius:0px;"></div>
  <div class="a" style="left:1056.4px;top:20.2px;width:0.7px;height:3.4px;background:#393939;border-radius:0px;"></div>
  <div class="a" style="left:0.0px;top:61.0px;width:69.4px;height:35.4px;background:#2b2b2b;border-radius:0px;"></div>
  <div class="a" style="left:0.0px;top:97.8px;width:69.4px;height:42.6px;background:#2b2b2b;border-radius:0px;"></div>
  <div class="a" style="left:69.3px;top:34.0px;width:0.8px;height:132.0px;background:#1b1b1b;border-radius:0px;"></div>
  <div class="a" style="left:97.0px;top:61.3px;width:973.0px;height:35.0px;background:#303030;border-radius:0px;"></div>
  <div class="a" style="left:97.0px;top:97.2px;width:973.0px;height:43.0px;background:#2a2a2a;border-radius:0px;"></div>
  <svg style="left:4.0px;top:75.5px" width="7.6" height="6" viewBox="0 0 7.6 6"><path d="M0.5 0.5H7.1V5.5H0.5z" stroke="#6a6a6a" stroke-width="0.7" fill="none" stroke-linecap="round" stroke-linejoin="round"/><path d="M3 1.8V4.2L5 3z" fill="#6a6a6a"/></svg>
  <svg style="left:18.3px;top:75.0px" width="6" height="7" viewBox="0 0 6 7"><rect x="0.6" y="3" width="4.8" height="3.6" rx="0.6" fill="#cfcfcf"/><path d="M1.6 3V2A1.4 1.4 0 0 1 4.4 2V3" stroke="#cfcfcf" stroke-width="0.8" fill="none" stroke-linecap="round" stroke-linejoin="round"/><path d="M2.2 5H3.8" stroke="#2b2b2b" stroke-width="0.6"/></svg>
  <svg style="left:30.8px;top:75.8px" width="8" height="5.4" viewBox="0 0 8 5.4"><path d="M0.5 2.7C2 0.2 6 0.2 7.5 2.7C6 5.2 2 5.2 0.5 2.7z" stroke="#cfcfcf" stroke-width="0.8" fill="none" stroke-linecap="round" stroke-linejoin="round"/><circle cx="4" cy="2.7" r="1.3" fill="#cfcfcf"/></svg>
  <svg style="left:44.2px;top:75.3px" width="8" height="6.4" viewBox="0 0 8 6.4"><path d="M0.5 2.2H2L4 0.6V5.8L2 4.2H0.5z" fill="#cfcfcf"/><path d="M5.2 1.8C6 2.6 6 3.8 5.2 4.6M6.4 0.8C7.8 2.2 7.8 4.2 6.4 5.6" stroke="#cfcfcf" stroke-width="0.7" fill="none" stroke-linecap="round" stroke-linejoin="round"/></svg>
  <svg style="left:58.5px;top:77.8px" width="6.4" height="1.4" viewBox="0 0 6.4 1.4"><circle cx="0.8" cy="0.7" r="0.6" fill="#bdbdbd"/><circle cx="3.2" cy="0.7" r="0.6" fill="#bdbdbd"/><circle cx="5.6" cy="0.7" r="0.6" fill="#bdbdbd"/></svg>
  <svg style="left:4.0px;top:116.5px" width="7.6" height="6" viewBox="0 0 7.6 6"><path d="M0.5 0.5H7.1V5.5H0.5z" stroke="#6a6a6a" stroke-width="0.7" fill="none" stroke-linecap="round" stroke-linejoin="round"/><path d="M3 1.8V4.2L5 3z" fill="#6a6a6a"/></svg>
  <svg style="left:18.3px;top:116.0px" width="6" height="7" viewBox="0 0 6 7"><rect x="0.6" y="3" width="4.8" height="3.6" rx="0.6" fill="#cfcfcf"/><path d="M1.6 3V2A1.4 1.4 0 0 1 4.4 2V3" stroke="#cfcfcf" stroke-width="0.8" fill="none" stroke-linecap="round" stroke-linejoin="round"/><path d="M2.2 5H3.8" stroke="#2b2b2b" stroke-width="0.6"/></svg>
  <svg style="left:30.8px;top:116.8px" width="8" height="5.4" viewBox="0 0 8 5.4"><path d="M0.5 2.7C2 0.2 6 0.2 7.5 2.7C6 5.2 2 5.2 0.5 2.7z" stroke="#cfcfcf" stroke-width="0.8" fill="none" stroke-linecap="round" stroke-linejoin="round"/><circle cx="4" cy="2.7" r="1.3" fill="#cfcfcf"/></svg>
  <svg style="left:44.2px;top:116.3px" width="8" height="6.4" viewBox="0 0 8 6.4"><path d="M0.5 2.2H2L4 0.6V5.8L2 4.2H0.5z" fill="#cfcfcf"/><path d="M5.2 1.8C6 2.6 6 3.8 5.2 4.6M6.4 0.8C7.8 2.2 7.8 4.2 6.4 5.6" stroke="#cfcfcf" stroke-width="0.7" fill="none" stroke-linecap="round" stroke-linejoin="round"/></svg>
  <svg style="left:58.5px;top:118.8px" width="6.4" height="1.4" viewBox="0 0 6.4 1.4"><circle cx="0.8" cy="0.7" r="0.6" fill="#bdbdbd"/><circle cx="3.2" cy="0.7" r="0.6" fill="#bdbdbd"/><circle cx="5.6" cy="0.7" r="0.6" fill="#bdbdbd"/></svg>
  <div class="a" style="left:72.3px;top:109.2px;width:20.7px;height:20.7px;background:#383838;border-radius:2.5px;"></div>
  <div class="t" style="left:72.3px;width:20.7px;text-align:center;top:114.6px;font-size:6.3px;color:#f4f4f4;font-weight:bold">封面</div>
  <div class="a" style="left:96.2px;top:62.2px;width:281.6px;height:32.6px;background:#0a4b53;border-radius:2px;border:1px solid #f4f4f4;border-left-width:1.6px;overflow:hidden"></div>
  <div class="a" style="left:97.8px;top:63.2px;width:279.0px;height:8.6px;background:#0f5660;border-radius:0px;"></div>
  <svg style="left:97.8px;top:71.8px;overflow:hidden" width="279" height="14.1" viewBox="0 0 279 14.1"><rect width="279" height="14.1" fill="#58dc86"/><use href="#gfb" x="0.0" y="0" width="28.1" height="14.1"/><use href="#gfb" x="28.1" y="0" width="28.1" height="14.1"/><use href="#gfb" x="56.2" y="0" width="28.1" height="14.1"/><use href="#gfh" x="84.3" y="0" width="28.1" height="14.1"/><use href="#gfh" x="112.4" y="0" width="28.1" height="14.1"/><use href="#gfh" x="140.5" y="0" width="28.1" height="14.1"/><use href="#gfh" x="168.6" y="0" width="28.1" height="14.1"/><use href="#gfh" x="196.7" y="0" width="28.1" height="14.1"/><use href="#gfh" x="224.8" y="0" width="28.1" height="14.1"/><use href="#gfh" x="252.9" y="0" width="28.1" height="14.1"/></svg>
  <svg style="left:97.8px;top:85.9px" width="279" height="8.2" viewBox="0 0 279 8.2"><rect width="279" height="8.2" fill="#0a4b53"/><path d="M0 8.2 L0 7 L0.0 6.6 L7.0 6.6 L11.0 7.2 L18.0 7.2 L21.0 6.6 L26.0 4.2 L29.0 3.8 L32.0 3.8 L39.0 2.6 L43.0 3.8 L46.0 3.2 L49.0 5.0 L52.0 4.2 L56.0 3.8 L59.0 3.2 L66.0 3.4 L73.0 7.2 L77.0 7.0 L84.0 7.4 L87.0 2.6 L92.0 2.6 L95.0 4.6 L100.0 3.4 L104.0 3.8 L109.0 5.0 L112.0 3.8 L115.0 2.6 L118.0 3.2 L123.0 2.6 L126.0 5.0 L129.0 4.2 L133.0 5.0 L140.0 2.6 L147.0 2.6 L150.0 3.8 L154.0 3.2 L159.0 3.4 L162.0 3.4 L167.0 5.0 L174.0 3.2 L177.0 4.2 L181.0 7.4 L184.0 7.4 L191.0 6.6 L195.0 7.2 L202.0 3.8 L206.0 4.6 L210.0 2.6 L217.0 5.0 L224.0 2.6 L228.0 5.0 L233.0 3.2 L238.0 5.0 L242.0 4.2 L249.0 3.2 L252.0 5.0 L256.0 4.2 L263.0 7.0 L266.0 7.0 L271.0 6.6 L274.0 7.4 L277.0 7.2 L279 7 L279 8.2Z" fill="#1d6d73"/><rect x="0" y="5" width="279" height="3.2" fill="#15636b" opacity=".75"/><path d="M0 6.8H279" stroke="#2f8a90" stroke-width="0.5" opacity=".7"/></svg>
  <div class="t" style="left:101.3px;top:62.4px;font-size:5.95px;color:#e8f2f3">jimeng-2025-10-11-7458-讲解自然，手上有讲解动作.mp4</div>
  <div class="a" style="left:255.0px;top:64.0px;width:34.0px;height:7.0px;background:#135c66;border-radius:1px;"></div>
  <div class="t" style="left:256.2px;top:62.4px;font-size:5.95px;color:#e8f2f3">00:00:04:11</div>
  <div class="a" style="left:98.2px;top:99.2px;width:278.4px;height:40.6px;background:#0a4b53;border-radius:2px;overflow:hidden"></div>
  <div class="a" style="left:98.2px;top:99.6px;width:278.4px;height:9.6px;background:#0d515a;border-radius:2px;"></div>
  <div class="a" style="left:99.6px;top:100.4px;width:117.0px;height:8.0px;background:#135c66;border-radius:1px;"></div>
  <div class="a" style="left:218.6px;top:100.4px;width:34.0px;height:8.0px;background:#135c66;border-radius:1px;"></div>
  <div class="t" style="left:101.3px;top:99.4px;font-size:6px;color:#e8f2f3">cd5e44e12d6e46079980f5377e6121a.png</div>
  <div class="t" style="left:220.0px;top:99.4px;font-size:6px;color:#e8f2f3">00:00:04:11</div>
  <div class="a" style="left:98.2px;top:109.2px;width:278.4px;height:21.2px;background:#3e5944;border-radius:0px;"></div><div class="a" style="left:119.9px;top:110.2px;width:4.6px;height:0.7px;background:#7c957f"></div><div class="a" style="left:148.0px;top:110.2px;width:4.6px;height:0.7px;background:#7c957f"></div><div class="a" style="left:176.1px;top:110.2px;width:4.6px;height:0.7px;background:#7c957f"></div><div class="a" style="left:204.2px;top:110.2px;width:4.6px;height:0.7px;background:#7c957f"></div><div class="a" style="left:232.3px;top:110.2px;width:4.6px;height:0.7px;background:#7c957f"></div><div class="a" style="left:260.4px;top:110.2px;width:4.6px;height:0.7px;background:#7c957f"></div><div class="a" style="left:288.5px;top:110.2px;width:4.6px;height:0.7px;background:#7c957f"></div><div class="a" style="left:316.6px;top:110.2px;width:4.6px;height:0.7px;background:#7c957f"></div><div class="a" style="left:344.7px;top:110.2px;width:4.6px;height:0.7px;background:#7c957f"></div>
  <div class="a" style="left:98.2px;top:112.0px;width:278.4px;height:17.2px;background:#f1f1f1;border-radius:0px;"></div>
  <div class="a" style="left:347.2px;top:19.2px;width:0.9px;height:147.0px;background:#8a781c;border-radius:0px;"></div>
  <div class="a" style="left:276.5px;top:25.0px;width:1.0px;height:141.0px;background:#d6d6d6;border-radius:0px;"></div>
  <div class="a" style="left:274.5px;top:18.8px;width:5.2px;height:7.6px;border:1px solid #f4f4f4;border-radius:1.2px 1.2px 2.6px 2.6px;background:#2a2a2a"></div>
</div>
</body>
</html>
